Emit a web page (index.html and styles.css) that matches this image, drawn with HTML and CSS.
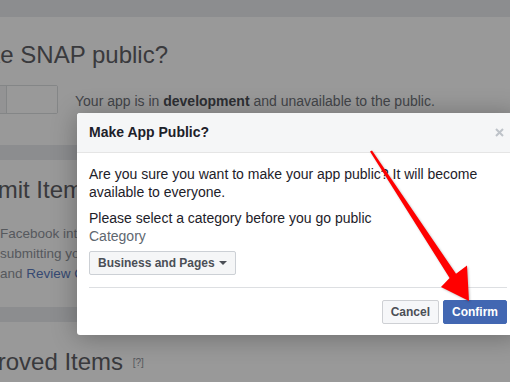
FILE: index.html
```html
<!DOCTYPE html>
<html lang="en">
<head>
    <meta charset="UTF-8">
    <title>App Review - SNAP</title>
    <link rel="stylesheet" href="styles.css">
</head>
<body>
    <div class="topbar"></div>
    <div class="page">
        <section class="card card-status">
            <h2>Make SNAP public?</h2>
            <div class="status-row">
                <div class="toggle">
                    <span class="toggle-on"></span>
                    <span class="toggle-off"></span>
                </div>
                <p>Your app is in <b>development</b> and unavailable to the public.</p>
            </div>
        </section>

        <section class="card card-submit">
            <h2>Submit Items for Approval</h2>
            <div class="card-text">
                <p>Facebook integrations that require approval before going live</p>
                <p>submitting your app, please read our Platform Policy</p>
                <p>and <a href="#">Review Checklist</a> to make sure it complies.</p>
            </div>
        </section>

        <section class="card card-approved">
            <h2>Approved Items <span class="help">[?]</span></h2>
        </section>
    </div>

    <div class="overlay"></div>

    <div class="dialog">
        <div class="dialog-header">
            <h3>Make App Public?</h3>
            <svg class="close" width="9" height="9" viewBox="0 0 9 9">
                <path d="M1 1 L8 8 M8 1 L1 8" stroke="#bec3c9" stroke-width="2"/>
            </svg>
        </div>
        <div class="dialog-body">
            <p>Are you sure you want to make your app public? It will become available to everyone.</p>
            <p class="gap">Please select a category before you go public</p>
            <label>Category</label>
            <button class="select">Business and Pages <span class="caret"></span></button>
        </div>
        <div class="dialog-footer">
            <button class="btn">Cancel</button>
            <button class="btn btn-primary">Confirm</button>
        </div>
    </div>

    <!-- red annotation arrow -->
    <svg class="arrow" width="510" height="382" viewBox="0 0 510 382">
        <polygon points="370,151.6 372,150.4 456,273.8 467,265.5 469,301 441,287 449.6,278" fill="#ff0000"/>
    </svg>
</body>
</html>
```

FILE: styles.css
```css
* {
    margin: 0;
    padding: 0;
    box-sizing: border-box;
}

body {
    width: 510px;
    height: 382px;
    overflow: hidden;
    position: relative;
    background: #e9ebee;
    font-family: 'Liberation Sans', Helvetica, Arial, sans-serif;
    font-size: 14px;
}

.topbar {
    height: 17px;
    background: #e9ebee;
}

.page {
    margin-left: -45px;
    width: 640px;
}

.card {
    background: white;
    margin-bottom: 15px;
}

.card h2 {
    font-size: 24px;
    font-weight: normal;
    line-height: 28px;
    color: #5f6166;
    white-space: nowrap;
}

.card-status {
    height: 128px;
    padding-top: 24px;
}

.status-row {
    display: flex;
    align-items: center;
    gap: 17px;
    margin-top: 16px;
}

.toggle {
    display: flex;
    height: 29px;
    border: 1px solid #dddfe2;
    border-radius: 2px;
}

.toggle-on {
    width: 51px;
    background: #f5f6f7;
    border-right: 1px solid #dddfe2;
}

.toggle-off {
    width: 50px;
    background: white;
}

.status-row p {
    color: #6f737a;
    padding-top: 2px;
}

.status-row b {
    color: #4b4f56;
}

.card-submit {
    height: 147px;
    padding-top: 16px;
}

.card-text {
    margin-top: 20px;
    padding-left: 45px;
}

.card-text p {
    font-size: 13.5px;
    line-height: 20px;
    color: #90949c;
    white-space: nowrap;
}

.card-text a {
    color: #5a7bc0;
    text-decoration: none;
}

.card-approved {
    height: 80px;
    padding-top: 26px;
}

.help {
    font-size: 10px;
    color: #90949c;
    margin-left: 3px;
    vertical-align: 4px;
}

.overlay {
    position: absolute;
    inset: 0;
    background: rgba(0, 0, 0, 0.4);
}

.dialog {
    position: absolute;
    left: 77px;
    top: 113px;
    width: 442px;
    background: white;
    border-radius: 3px;
    box-shadow: 0 2px 26px rgba(0, 0, 0, 0.3);
}

.dialog-header {
    display: flex;
    justify-content: space-between;
    align-items: center;
    background: #f5f6f7;
    border-bottom: 1px solid #e5e5e5;
    border-radius: 3px 3px 0 0;
    padding: 10px 15px 10px 12px;
}

.dialog-header h3 {
    font-size: 14px;
    line-height: 19px;
    color: #1d2129;
}

.dialog-body {
    padding: 12px 12px 0;
    color: #1d2129;
    line-height: 18px;
}

.dialog-body .gap {
    margin-top: 8px;
}

.dialog-body label {
    display: block;
    color: #606770;
    line-height: 19px;
}

.select {
    display: flex;
    align-items: center;
    gap: 4px;
    height: 24px;
    margin-top: 5px;
    padding: 0 8px;
    background: #f5f6f7;
    border: 1px solid #ccd0d5;
    border-radius: 2px;
    font-family: inherit;
    font-size: 12px;
    font-weight: bold;
    color: #4b4f56;
}

.caret {
    border-left: 4px solid transparent;
    border-right: 4px solid transparent;
    border-top: 4px solid #4b4f56;
}

.dialog-footer {
    display: flex;
    justify-content: flex-end;
    gap: 4px;
    margin: 12px 12px 0;
    padding: 12px 0 11px;
    border-top: 1px solid #dddfe2;
}

.btn {
    height: 24px;
    padding: 0 8px;
    background: #f6f7f9;
    border: 1px solid #ced0d4;
    border-radius: 2px;
    font-family: inherit;
    font-size: 12px;
    font-weight: bold;
    color: #4b4f56;
}

.btn-primary {
    background: #4267b2;
    border-color: #4267b2;
    color: white;
}

.arrow {
    position: absolute;
    left: 0;
    top: 0;
    filter: drop-shadow(1px 1px 1px rgba(0, 0, 0, 0.25));
}
```
